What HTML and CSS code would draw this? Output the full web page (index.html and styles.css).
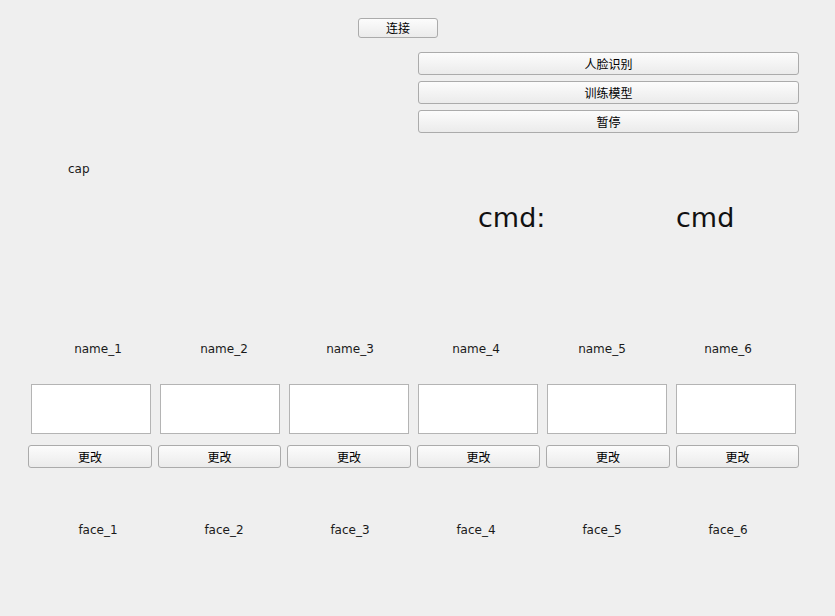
FILE: index.html
```html
<!DOCTYPE html>
<html>
<head>
<meta charset="utf-8">
<link rel="stylesheet" href="styles.css">
</head>
<body>
<div class="window">
  <div class="connect-row"><button class="btn connect">连接</button></div>
  <div class="actions">
    <button class="btn action">人脸识别</button>
    <button class="btn action">训练模型</button>
    <button class="btn action">暂停</button>
  </div>
  <div class="cap">cap</div>
  <div class="cmd-row"><span class="cmd-label">cmd:</span><span class="cmd-value">cmd</span></div>
  <div class="labels names">
    <span>name_1</span><span>name_2</span><span>name_3</span><span>name_4</span><span>name_5</span><span>name_6</span>
  </div>
  <div class="inputs">
    <input class="field" type="text"><input class="field" type="text"><input class="field" type="text"><input class="field" type="text"><input class="field" type="text"><input class="field" type="text">
  </div>
  <div class="changes">
    <button class="btn change">更改</button><button class="btn change">更改</button><button class="btn change">更改</button><button class="btn change">更改</button><button class="btn change">更改</button><button class="btn change">更改</button>
  </div>
  <div class="labels faces">
    <span>face_1</span><span>face_2</span><span>face_3</span><span>face_4</span><span>face_5</span><span>face_6</span>
  </div>
</div>
</body>
</html>
```
FILE: styles.css
```css
html, body {
  margin: 0;
  padding: 0;
  background: #efefef;
}
.window {
  width: 835px;
  height: 616px;
  overflow: hidden;
  font-family: "DejaVu Sans", "Noto Sans CJK SC", sans-serif;
  font-size: 12px;
  color: #1a1a1a;
}
.btn {
  box-sizing: border-box;
  margin: 0;
  padding: 2px 0 0 0;
  border: 1px solid #ababab;
  border-radius: 3px;
  background: linear-gradient(#fcfcfc, #ebebeb);
  font-family: "DejaVu Sans", "Noto Sans CJK SC", sans-serif;
  font-size: 12px;
  color: #000;
  line-height: 1;
  display: block;
}
.connect-row {
  padding: 18px 0 0 358px;
}
.connect {
  width: 80px;
  height: 20px;
}
.actions {
  margin: 14px 0 0 418px;
  width: 381px;
  display: flex;
  flex-direction: column;
  gap: 6px;
}
.action {
  height: 23px;
  width: 381px;
}
.cap {
  margin: 29px 0 0 68px;
  height: 14px;
  line-height: 14px;
}
.cmd-row {
  margin-top: 25px;
  display: flex;
  height: 34px;
  line-height: 34px;
  font-size: 27px;
  color: #111;
}
.cmd-label {
  margin-left: 478px;
  width: 198px;
}
.labels {
  display: grid;
  grid-template-columns: repeat(6, 126px);
  margin-left: 35px;
  height: 14px;
  line-height: 14px;
  text-align: center;
}
.names {
  margin-top: 107px;
}
.inputs {
  display: flex;
  gap: 9px;
  margin: 28px 0 0 31px;
}
.field {
  box-sizing: border-box;
  margin: 0;
  width: 120px;
  height: 50px;
  border: 1px solid #b4b4b4;
  background: #fff;
  padding: 0;
}
.changes {
  display: grid;
  grid-template-columns: 124px 123px 124px 123px 124px 123px;
  column-gap: 6px;
  margin: 11px 0 0 28px;
}
.change {
  height: 23px;
  width: 100%;
}
.faces {
  margin-top: 55px;
}
```
